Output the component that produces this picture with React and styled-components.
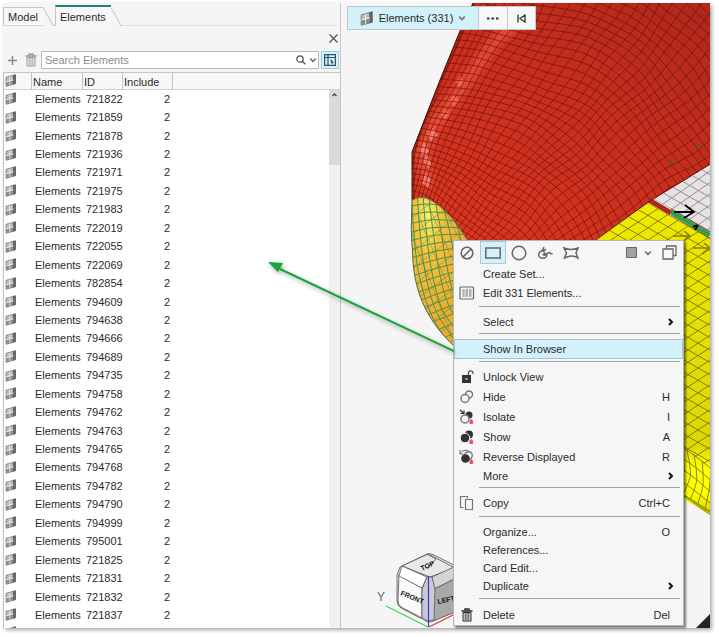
import { useState } from "react";
import styled, { createGlobalStyle } from "styled-components";

const GlobalStyle = createGlobalStyle`
  * {
    box-sizing: border-box;
  }
  body {
    margin: 0;
    background: #fff;
    color: #2b2b2b;
    font-family: "Liberation Sans", Arial, sans-serif;
    font-size: 11px;
  }
  button, input {
    font: inherit;
    color: inherit;
    margin: 0;
  }
`;

const Window = styled.main`
  display: flex;
  height: calc(100vh - 12px);
  margin: 3px 9px 9px 3px;
  background: #f5f5f5;
  box-shadow: 2px 2px 4px rgba(0, 0, 0, 0.35);
`;

const Panel = styled.section`
  display: flex;
  flex-direction: column;
  flex: 0 0 338px;
  min-width: 0;
  border-right: 1px solid #c4c4c4;
`;

const TabBar = styled.div`
  display: flex;
  align-items: flex-end;
  height: 23px;
  padding-top: 2px;
`;

const Tab = styled.button`
  display: flex;
  align-items: center;
  height: ${(p) => (p.$active ? 21 : 19)}px;
  padding: 0 5px 0 4px;
  border: 0;
  border-left: 1px solid #c4c4c4;
  border-top: ${(p) => (p.$active ? "2px solid #1d7f80" : "1px solid #c4c4c4")};
  border-bottom: ${(p) => (p.$active ? "0" : "1px solid #d6d6d6")};
  background: #f7f7f7;
`;

const Slant = styled.svg`
  flex: none;
  width: 12px;
  height: 19px;
  fill: none;
  stroke: #c4c4c4;
`;

const TabRule = styled.div`
  flex: 1;
  margin-right: 2px;
  border-bottom: 1px solid #e2e2e2;
`;

const CloseRow = styled.div`
  display: flex;
  justify-content: flex-end;
  align-items: center;
  height: 24px;
`;

const IconButton = styled.button`
  display: flex;
  align-items: center;
  justify-content: center;
  flex: none;
  width: ${(p) => p.$width || 18}px;
  height: 18px;
  padding: 0;
  border: 1px solid ${(p) => (p.$active ? "#9ccbd8" : "transparent")};
  background: ${(p) => (p.$active ? "#d6f1fa" : "transparent")};
  color: ${(p) => p.$color || "#555"};
`;

const SearchRow = styled.div`
  display: flex;
  align-items: center;
  gap: 2px;
  height: 22px;
  padding: 0 1px 2px 0;
`;

const SearchBox = styled.div`
  display: flex;
  flex: 1;
  align-items: center;
  min-width: 0;
  height: 18px;
  border: 1px solid #b9b9b9;
  background: #fff;

  input {
    flex: 1;
    min-width: 0;
    padding: 0 3px;
    border: 0;
    outline: 0;
    background: transparent;
  }
  input::placeholder {
    color: #8c8c8c;
  }
`;

const ListArea = styled.div`
  position: relative;
  flex: 1;
  min-height: 0;
  overflow: hidden;
  background: #fff;
  border-left: 1px solid #c4c4c4;
`;

const ElementTable = styled.table`
  width: 100%;
  height: 570px;
  table-layout: fixed;
  border-collapse: separate;
  border-spacing: 0;

  th {
    height: 18px;
    padding: 2px 1px 0;
    border-top: 1px solid #c4c4c4;
    border-bottom: 1px solid #d0d0d0;
    border-right: 1px solid #c4c4c4;
    background: #f7f7f7;
    font-weight: 400;
    text-align: left;
    line-height: 13px;
  }
  th:last-child {
    border-right: 0;
  }
  td {
    padding: 0 3px 1px;
    line-height: 14px;
    white-space: nowrap;
  }
  th:first-child,
  td:first-child {
    padding: 0 1px 1px;
  }
  td:nth-child(4) {
    padding-right: 3px;
    text-align: right;
  }
  svg {
    display: block;
  }
`;

const ScrollTrack = styled.div`
  position: absolute;
  top: 18px;
  right: 0;
  bottom: 0;
  width: 11px;
  background: #f1f1f1;
`;

const ScrollThumb = styled.div`
  display: flex;
  justify-content: center;
  height: 75px;
  padding-top: 3px;
  background: #dadada;
`;

const Viewport = styled.section`
  position: relative;
  flex: 1;
  min-width: 0;
`;

const Scene = styled.svg`
  display: block;
  width: 100%;
  height: 100%;
`;

const SelectionBar = styled.div`
  position: absolute;
  top: 3px;
  left: 6px;
  display: flex;
  height: 24px;
  border: 1px solid #c2c8ca;
  background: #f7f7f7;
`;

const BarButton = styled.button`
  display: flex;
  align-items: center;
  justify-content: center;
  gap: 5px;
  width: ${(p) => p.$width}px;
  padding: 0;
  border: 0;
  border-left: ${(p) => (p.$divided ? "1px solid #c2c8ca" : "0")};
  background: ${(p) => (p.$active ? "#d3f1fa" : "#f8f8f8")};
`;

const Menu = styled.div`
  position: absolute;
  top: 237px;
  left: 112px;
  width: 231px;
  border: 1px solid #b5b5b5;
  background: #f6f6f6;
  box-shadow: 2px 2px 2px rgba(0, 0, 0, 0.5);
`;

const MenuTools = styled.div`
  display: flex;
  align-items: flex-start;
  height: 24px;
`;

const ToolButton = styled.button`
  display: flex;
  align-items: center;
  justify-content: center;
  width: ${(p) => p.$width || 26}px;
  height: 23px;
  margin-left: ${(p) => (p.$push ? "auto" : "0")};
  padding: 0;
  border: 1px solid ${(p) => (p.$active ? "#a6cbd6" : "transparent")};
  background: ${(p) => (p.$active ? "#d3f1fa" : "transparent")};
`;

const MenuItem = styled.button`
  display: flex;
  align-items: center;
  width: 100%;
  height: ${(p) => (p.$tall ? 20 : 18)}px;
  padding: 0 12px 0 0;
  border: 1px solid ${(p) => (p.$active ? "#a9c3cb" : "transparent")};
  background: ${(p) => (p.$active ? "#d3f1fa" : "transparent")};
  text-align: left;
`;

const MenuIcon = styled.span`
  display: flex;
  justify-content: center;
  width: 24px;
  margin-right: 4px;
`;

const MenuLabel = styled.span`
  flex: 1;
`;

const Submenu = styled.svg`
  margin-right: -4px;
`;

const MenuRule = styled.hr`
  height: 1px;
  margin: ${(p) => (p.$tight ? "2px 3px 5px 25px" : "3px 3px 6px 25px")};
  border: 0;
  background: #a3a3a3;
`;

const Pointer = styled.svg`
  position: absolute;
  top: 16px;
  left: -190px;
  width: 190px;
  height: 104px;
  pointer-events: none;
  filter: drop-shadow(1px 2px 2px rgba(0, 0, 0, 0.35));
`;

const ids = [
  721822, 721859, 721878, 721936, 721971, 721975, 721983, 722019, 722055,
  722069, 782854, 794609, 794638, 794666, 794689, 794735, 794758, 794762,
  794763, 794765, 794768, 794782, 794790, 794999, 795001, 721825, 721831,
  721832, 721837,
];

const menu = [
  { label: "Create Set..." },
  { label: "Edit 331 Elements...", icon: "edit", tall: true },
  { rule: true },
  { label: "Select", sub: true },
  { rule: true, tight: true },
  { label: "Show In Browser", tall: true, active: true },
  { rule: true, tight: true },
  { label: "Unlock View", icon: "lock", tall: true },
  { label: "Hide", icon: "hide", keys: "H", tall: true },
  { label: "Isolate", icon: "isolate", keys: "I", tall: true },
  { label: "Show", icon: "show", keys: "A", tall: true },
  { label: "Reverse Displayed", icon: "reverse", keys: "R", tall: true },
  { label: "More", sub: true },
  { rule: true, tight: true },
  { label: "Copy", icon: "copy", keys: "Ctrl+C", tall: true },
  { rule: true },
  { label: "Organize...", keys: "O" },
  { label: "References..." },
  { label: "Card Edit..." },
  { label: "Duplicate", sub: true },
  { rule: true },
  { label: "Delete", icon: "trash", keys: "Del", tall: true },
];

// Grid lines of a quad that is cut into nu x nv cells.
const subdivide = ([a, b, c, d], nu, nv) => {
  const at = (i, j) => {
    const u = i / nu;
    const v = j / nv;
    return [0, 1]
      .map((k) =>
        (
          (1 - u) * (1 - v) * a[k] +
          u * (1 - v) * b[k] +
          u * v * c[k] +
          (1 - u) * v * d[k]
        ).toFixed(1)
      )
      .join(" ");
  };
  let path = "";
  for (let i = 0; i <= nu; i++) path += `M${at(i, 0)}L${at(i, nv)}`;
  for (let j = 0; j <= nv; j++) path += `M${at(0, j)}L${at(nu, j)}`;
  return path;
};

// Catmull-Rom value through a list of points, t from 0 to points.length - 1.
const spline = (points, t) => {
  const last = points.length - 1;
  const i = Math.min(Math.floor(t), last - 1);
  const f = t - i;
  const p1 = points[i];
  const p2 = points[i + 1];
  const p0 = points[i - 1] || p1.map((v, k) => 2 * v - p2[k]);
  const p3 = points[i + 2] || p2.map((v, k) => 2 * v - p1[k]);
  return [0, 1].map(
    (k) =>
      0.5 *
      (2 * p1[k] +
        (p2[k] - p0[k]) * f +
        (2 * p0[k] - 5 * p1[k] + 4 * p2[k] - p3[k]) * f * f +
        (3 * p1[k] - p0[k] - 3 * p2[k] + p3[k]) * f * f * f)
  );
};

// Curved mesh over a net of control points; wobble bends the lines a little.
const surface = (net, perRow, perCol, wobble) => {
  const nu = (net[0].length - 1) * perRow;
  const nv = (net.length - 1) * perCol;
  const at = (i, j) => {
    const [x, y] = spline(
      net.map((row) => spline(row, i / perRow)),
      j / perCol
    );
    const dx = wobble * Math.sin(y / 17 + x / 41) + (wobble / 2) * Math.sin(x / 9);
    const dy = wobble * Math.sin(x / 19 - y / 37) + (wobble / 2) * Math.sin(y / 11);
    return `${(x + dx).toFixed(1)} ${(y + dy).toFixed(1)}`;
  };
  let path = "";
  for (let i = 0; i <= nu; i++)
    for (let j = 0; j <= nv; j++) path += (j ? "L" : "M") + at(i, j);
  for (let j = 0; j <= nv; j++)
    for (let i = 0; i <= nu; i++) path += (i ? "L" : "M") + at(i, j);
  return path;
};

const redMesh = surface(
  [
    [[392, 205], [406, 146], [436, 76], [468, 0], [494, -64]],
    [[426, 218], [446, 152], [484, 85], [528, 10], [560, -54]],
    [[450, 240], [496, 177], [556, 108], [618, 34], [660, -40]],
    [[480, 265], [540, 206], [606, 146], [672, 86], [740, 20]],
    [[506, 310], [575, 257], [650, 204], [722, 156], [800, 108]],
  ],
  11,
  8,
  2
);

const orangeMesh = surface(
  [
    [[404, 190], [408, 232], [411, 275], [426, 315], [450, 356]],
    [[428, 190], [434, 228], [438, 268], [450, 306], [474, 344]],
    [[452, 196], [466, 228], [472, 262], [484, 296], [500, 330]],
  ],
  5,
  4,
  1
);

const orangeBraces = subdivide([[396, 230], [460, 180], [520, 290], [440, 350]], 6, 9);

const yellowMesh = subdivide(
  [[648, 203], [958, 381], [648, 587], [338, 409]],
  31,
  31
);
const whiteMesh = subdivide(
  [[654, 199], [734, 245], [814, 189], [734, 143]],
  9,
  9
);
const rimMesh = surface(
  [
    [[674, 442], [694, 455], [720, 476]],
    [[678, 466], [697, 480], [715, 496]],
    [[668, 484], [690, 500], [712, 516]],
  ],
  3,
  2,
  0
);

const ElementIcon = ({ size = 12 }) => (
  <svg width={size} height={size + 1} viewBox="0 0 12 13" aria-hidden="true">
    <path d="M1 3.300 8.500 1.300v9L1 12.300z" fill="#bdbdbd" stroke="#777" strokeWidth="0.800" />
    <path d="m8.500 1.300 2-.600v9l-2 .600z" fill="#6b6b6b" stroke="#555" strokeWidth="0.800" />
    <path d="M1.300 8 8.200 6.200v3.900L1.300 12z" fill="#8a8a8a" />
    <path d="M1 7.800 8.500 5.900M4.800 2.500v8.600" stroke="#f4f4f4" strokeWidth="0.800" />
  </svg>
);

const TrashIcon = () => (
  <svg width="12" height="14" viewBox="0 0 12 14" fill="none" stroke="currentColor" aria-hidden="true">
    <path d="M.500 3h11M4 3V1h4v2" strokeWidth="1.300" />
    <path d="M2 4.500h8v8.500H2z" fill="currentColor" fillOpacity="0.150" />
    <path d="M4.300 5v7M6 5v7M7.700 5v7" strokeWidth="0.700" />
  </svg>
);

const Chevron = () => (
  <svg width="8" height="6" viewBox="0 0 8 6" fill="none" stroke="#777" strokeWidth="1.800" aria-hidden="true">
    <path d="m1.200 1.500 2.800 3 2.800-3" />
  </svg>
);

const RedMark = () => (
  <path d="M11 14.500v-2.500l1.300-1.500 1.300 1.500v2.500z" fill="#e8505a" stroke="#e8505a" />
);

const glyphs = {
  edit: (
    <g fill="none" stroke="#666" strokeWidth="1.200">
      <rect x="1" y="2" width="13.500" height="12" rx="1" />
      <path d="M3.500 5h2M3.500 7h2M3.500 9h2M3.500 11h2M6.500 5H9M6.500 7H9M6.500 9H9M6.500 11H9M10 5h2.500M10 7h2.500M10 9h2.500M10 11h2.500" />
    </g>
  ),
  lock: (
    <g>
      <path d="M3 6h9v8H3z" fill="#333" />
      <path d="M9.500 6V4a2.200 2.200 0 0 1 4.400 0v1" fill="none" stroke="#555" strokeWidth="1.300" />
      <path d="M6.500 9h2v2h-2z" fill="#bbb" />
    </g>
  ),
  hide: (
    <g fill="#f6f6f6" stroke="#777" strokeWidth="1.400">
      <circle cx="10" cy="5.500" r="3.500" />
      <circle cx="6" cy="9.500" r="4" />
    </g>
  ),
  isolate: (
    <g>
      <circle cx="10" cy="6" r="3.500" fill="#333" />
      <circle cx="6" cy="10" r="4" fill="#f6f6f6" stroke="#777" strokeWidth="1.500" />
      <path d="m1 1 4 3.500M5 1.500v3H1.500" fill="none" stroke="#333" strokeWidth="1.200" />
      <RedMark />
    </g>
  ),
  show: (
    <g>
      <circle cx="10" cy="5.500" r="4" fill="#333" />
      <circle cx="6" cy="9" r="4.800" fill="#333" stroke="#f6f6f6" />
      <RedMark />
    </g>
  ),
  reverse: (
    <g>
      <circle cx="9.500" cy="6.500" r="3.800" fill="none" stroke="#777" strokeWidth="1.400" />
      <circle cx="6.500" cy="9.500" r="4.300" fill="#333" />
      <path d="M1.500 4.500c1.500-3 5-4 8-2.500M1 1v4h3.500" fill="none" stroke="#666" />
      <RedMark />
    </g>
  ),
  copy: (
    <g fill="#f6f6f6" stroke="#777" strokeWidth="1.200">
      <path d="M4.500 12.500H1.500V1.500h7v2" />
      <path d="M6.500 4.500h7v10h-7z" />
    </g>
  ),
};

const Glyph = ({ name }) =>
  name === "trash" ? (
    <TrashIcon />
  ) : (
    <svg width="16" height="16" viewBox="0 0 16 16" aria-hidden="true">
      {glyphs[name]}
    </svg>
  );

const tools = [
  {
    name: "Clear",
    art: (
      <>
        <circle cx="8" cy="8" r="5.800" />
        <path d="m4 12 8-8" />
      </>
    ),
  },
  { name: "Rectangle", art: <path d="M.800 3h14.400v10H.800z" /> },
  { name: "Circle", art: <circle cx="8" cy="8" r="6.800" /> },
  {
    name: "Freehand",
    art: <path d="M5.500 5.500C1 7 .500 11.500 4 13c4 1 6.500-1.500 5.500-3.500-1-1.500-4-.500-3 .500 2 1.500 4-3 6-2.500 1 .300.500 1.800 3 1M5.500 5.500 9 4.500M7 2l-1.500 3.500L8 7.500" />,
  },
  {
    name: "Polygon",
    art: <path d="M1 3c4.500 2 9.500 2 14 0l-2 5 2 5c-3.500-2.500-7-2.500-11-1l-2.500 1L3.500 8z" />,
  },
];

const ElementsPanel = () => {
  const [query, setQuery] = useState("");
  const rows = ids.filter((id) => String(id).includes(query));

  return (
    <Panel>
      <TabBar>
        <Tab>Model</Tab>
        <Slant viewBox="0 0 12 19">
          <path d="M0 .500 10 18.500H12" />
        </Slant>
        <Tab $active>Elements</Tab>
        <Slant viewBox="0 0 12 19">
          <path d="M0 .500 10 18.500H12" />
        </Slant>
        <TabRule />
      </TabBar>
      <CloseRow>
        <IconButton $width={14} aria-label="Close">
          <svg width="9" height="9" viewBox="0 0 9 9" stroke="currentColor" strokeWidth="1.300">
            <path d="m.500.500 8 8m0-8-8 8" />
          </svg>
        </IconButton>
      </CloseRow>
      <SearchRow>
        <IconButton $color="#888" aria-label="Add">
          <svg width="9" height="9" viewBox="0 0 9 9" stroke="currentColor" strokeWidth="1.500">
            <path d="M4.500 0v9M0 4.500h9" />
          </svg>
        </IconButton>
        <IconButton $width={16} $color="#999" aria-label="Delete element">
          <TrashIcon />
        </IconButton>
        <SearchBox>
          <input
            aria-label="Search Elements"
            placeholder="Search Elements"
            value={query}
            onChange={(e) => setQuery(e.target.value)}
          />
          <IconButton $width={14} aria-label="Search">
            <svg width="10" height="10" viewBox="0 0 10 10" fill="none" stroke="#555" strokeWidth="1.300">
              <circle cx="4" cy="4" r="3.200" />
              <path d="m6.300 6.300 3 3" />
            </svg>
          </IconButton>
          <IconButton $width={10} aria-label="Search options">
            <Chevron />
          </IconButton>
        </SearchBox>
        <IconButton $active aria-label="Browser selection">
          <svg width="12" height="12" viewBox="0 0 12 12" fill="none" stroke="#2a5566" strokeWidth="1.200">
            <path d="M.600.600h10.800v10.800H.600zM.600 3.500h10.800M4 1v10.500" />
            <path d="m6.500 5 3.500 3.500-1.700.100.700 1.900-2-1.500z" fill="#2a5566" stroke="none" />
          </svg>
        </IconButton>
      </SearchRow>
      <ListArea>
        <ElementTable>
          <colgroup>
            <col style={{ width: 28 }} />
            <col style={{ width: 51 }} />
            <col style={{ width: 40 }} />
            <col style={{ width: 50 }} />
            <col />
          </colgroup>
          <thead>
            <tr>
              <th aria-label="Type"><ElementIcon /></th>
              <th>Name</th>
              <th>ID</th>
              <th>Include</th>
              <th aria-label="Spacer" />
            </tr>
          </thead>
          <tbody>
            {rows.map((id) => (
              <tr key={id}>
                <td><ElementIcon /></td>
                <td>Elements</td>
                <td>{id}</td>
                <td>2</td>
                <td />
              </tr>
            ))}
            <tr>
              <td><ElementIcon /></td>
              <td colSpan={4} />
            </tr>
          </tbody>
        </ElementTable>
        <ScrollTrack>
          <ScrollThumb>
            <svg width="5" height="4" viewBox="0 0 5 4" fill="none" stroke="#444" strokeWidth="1.300">
              <path d="m.500 3 2-2 2 2" />
            </svg>
          </ScrollThumb>
        </ScrollTrack>
      </ListArea>
    </Panel>
  );
};

const Model = () => (
  <Scene viewBox="341 3 369 625" preserveAspectRatio="xMinYMin slice" aria-hidden="true">
    <defs>
      <linearGradient id="red" x1="0" y1="1" x2="1" y2="0">
        <stop offset="0" stopColor="#df3722" />
        <stop offset="0.500" stopColor="#cb2f1e" />
        <stop offset="1" stopColor="#b0271b" />
      </linearGradient>
      <radialGradient id="orange" cx="0.300" cy="0.120" r="0.700">
        <stop offset="0" stopColor="#ffee66" />
        <stop offset="0.350" stopColor="#f6be3a" />
        <stop offset="1" stopColor="#eeaa2c" />
      </radialGradient>
      <linearGradient id="yellow" x1="0" y1="0" x2="0" y2="1">
        <stop offset="0" stopColor="#eeea00" />
        <stop offset="0.550" stopColor="#dedc06" />
        <stop offset="0.780" stopColor="#dcda06" />
        <stop offset="0.850" stopColor="#ffff08" />
        <stop offset="0.930" stopColor="#ffff00" />
        <stop offset="1" stopColor="#d6d200" />
      </linearGradient>
      <clipPath id="redClip">
        <path id="redShape" d="M473 3 460 31 440 80 426 115 412 152V200Q418 196 426 198C446 206 458 226 468 241H596L648 203 710 165V3z" />
      </clipPath>
      <clipPath id="orangeClip">
        <path id="orangeShape" d="M412 200Q418 196 426 198C446 206 458 226 468 241V358C432 330 416 300 413 262Q410 230 412 200z" />
      </clipPath>
      <clipPath id="yellowClip">
        <path id="yellowShape" d="M596 240 648 203 710 238V515L684 499 600 450z" />
      </clipPath>
      <clipPath id="flatClip">
        <path d="M590 190H720V476L676 442z" />
      </clipPath>
      <clipPath id="whiteClip">
        <path id="whiteShape" d="M654 199 710 166V232z" />
      </clipPath>
      <filter id="soft">
        <feGaussianBlur stdDeviation="5" />
      </filter>
    </defs>

    <use href="#redShape" fill="url(#red)" />
    <g clipPath="url(#redClip)">
      <path d="M520 20 494 42 460 90 434 125 422 150 428 185" fill="none" stroke="#ff6a50" strokeWidth="9" opacity="0.700" filter="url(#soft)" />
      <g fill="#fb7a6b">
        <path d="m427 134 6-6 5 7-7 6zM419 150l5-8 5 9-5 5zM428 168l-5-8 4-5 5 10zM422 183l3-10 6 6-2 9z" />
        <path d="m449 101 5-6 5 5-5 6zM441 115l5-6 4 5-5 6zM455 82l5-6 4 6-5 5z" opacity="0.600" />
      </g>
      <path d="M473 3 440 80 412 152V200" fill="none" stroke="#6d170c" strokeWidth="6" opacity="0.400" />
      <path d={redMesh} fill="none" stroke="#5e1008" strokeWidth="0.800" opacity="0.750" />
    </g>
    <path d="M473 3 460 31 440 80 412 152V200" fill="none" stroke="#45120d" />

    <use href="#orangeShape" fill="url(#orange)" />
    <g clipPath="url(#orangeClip)" fill="none" stroke="#4a9050">
      <path d={orangeMesh} strokeWidth="1" />
      <path d={orangeBraces} strokeWidth="0.800" opacity="0.650" />
    </g>
    <use href="#orangeShape" fill="none" stroke="#48704a" />

    <use href="#yellowShape" fill="url(#yellow)" />
    <g clipPath="url(#yellowClip)" fill="none" stroke="#6a6500" strokeWidth="0.900">
      <path d={yellowMesh} opacity="0.850" clipPath="url(#flatClip)" />
      <path d={rimMesh} opacity="0.850" />
      <path d="m680 493 34 21" stroke="#a19c00" strokeWidth="2" />
      <path d="M673 236h17m-6-5 6 5-8 6M693 248h17m-6-5 6 5-8 6" stroke="#8b7b00" strokeWidth="1.600" />
    </g>

    <use href="#whiteShape" fill="#e6e2e4" />
    <path d={whiteMesh} clipPath="url(#whiteClip)" fill="none" stroke="#8d8787" strokeWidth="0.900" />
    <path d="m649 200 22 13" stroke="#ad2a1d" strokeWidth="5" />
    <path d="m671 212 39 23" stroke="#2aa049" strokeWidth="4" />
    <path d="m671 209 39 23M671 215l39 23M596 240l52-38 62-38" stroke="#3c2b12" fill="none" strokeWidth="0.800" />
    <path d="M674 212h19m-8-7 9 7-10 6M693 227l4-2m-2 5 3-5" stroke="#000" strokeWidth="1.800" fill="none" />
    <path d="m668 161 5-2 2 3-4 2zM695 145l5-2 2 3-4 2z" fill="#85451d" />

    <path d="M696 628 710 614V628z" fill="#242424" />

    <g stroke="#555" strokeWidth="0.800" strokeLinejoin="round">
      <path d="M400 567 427 554Q430 553 434 555L452 564 480 578V600L431 622 426 621 401 608Q397 606 397 600V575z" fill="#ddd" />
      <path d="M402 566 428 554 455 568 430 577z" fill="#e8e8e8" />
      <path d="M399 575 422 588V618L401 607Q398 605 398 600z" fill="#fafafa" />
      <path d="M402 566 427 577 422 588 399 576z" fill="#fff" />
      <path d="m434 589 24-12v34l-25 10z" fill="#a8a8a8" />
      <path d="m432 577 24-11v12l-22 11z" fill="#d4d4d4" />
      <path d="M427 577h5l3 12-1 31-7 1-5-4v-28z" fill="#c9c9d8" />
      <path d="M427 554 436 559 427 568" fill="none" />
    </g>
    <path d="M386 606 428 627" stroke="#3cdb4c" strokeWidth="1.300" />
    <path d="m429 627 30-15" stroke="#e13b3b" strokeWidth="1.300" />
    <path d="M428.500 576V627" stroke="#3a34d2" strokeWidth="1.200" />
    <g fill="#111" fontFamily="Liberation Sans, Arial, sans-serif" fontSize="7" fontWeight="700">
      <text x="400" y="595" transform="rotate(22 400 595)">FRONT</text>
      <text x="438" y="604" transform="rotate(-12 438 604)">LEFT</text>
      <text x="422" y="571" transform="rotate(-25 422 571)">TOP</text>
    </g>
    <text x="377" y="601" fill="#666" fontFamily="Liberation Sans, Arial, sans-serif" fontSize="12">Y</text>
  </Scene>
);

const ContextMenu = () => (
  <Menu>
    <MenuTools>
      {tools.map((tool, i) => (
        <ToolButton key={tool.name} $active={i === 1} aria-label={tool.name}>
          <svg width="16" height="16" viewBox="0 0 16 16" fill="none" stroke="#666" strokeWidth="1.500">
            {tool.art}
          </svg>
        </ToolButton>
      ))}
      <ToolButton $push $width={20} aria-label="Fill">
        <svg width="11" height="11" viewBox="0 0 11 11">
          <path d="M.500.500h10v10H.500z" fill="#a2a2a2" stroke="#666" />
        </svg>
      </ToolButton>
      <ToolButton $width={14} aria-label="Fill options">
        <Chevron />
      </ToolButton>
      <ToolButton $width={28} aria-label="Stack">
        <svg width="15" height="15" viewBox="0 0 15 15" fill="#f6f6f6" stroke="#666" strokeWidth="1.300">
          <path d="M4.500 1h9.500v9.500H4.500z" />
          <path d="M1 4h10v10H1z" />
        </svg>
      </ToolButton>
    </MenuTools>
    {menu.map((item, i) =>
      item.rule ? (
        <MenuRule key={i} $tight={item.tight} />
      ) : (
        <MenuItem key={item.label} $tall={item.tall} $active={item.active}>
          <MenuIcon>{item.icon && <Glyph name={item.icon} />}</MenuIcon>
          <MenuLabel>{item.label}</MenuLabel>
          {item.keys}
          {item.sub && (
            <Submenu width="6" height="8" viewBox="0 0 6 8" fill="none" stroke="#111" strokeWidth="2">
              <path d="m1 1 3 3-3 3" />
            </Submenu>
          )}
        </MenuItem>
      )
    )}
    <Pointer viewBox="0 0 190 104">
      <path d="M190 94 16 12" stroke="#17a43a" strokeWidth="2" />
      <path d="m4 5 15 1-5 9z" fill="#17a43a" />
    </Pointer>
  </Menu>
);

const App = () => (
  <>
    <GlobalStyle />
    <Window>
      <ElementsPanel />
      <Viewport>
        <Model />
        <SelectionBar>
          <BarButton $width={130} $active>
            <ElementIcon size={14} />
            Elements (331)
            <Chevron />
          </BarButton>
          <BarButton $width={29} $divided aria-label="More options">
            <svg width="12" height="3" viewBox="0 0 12 3" fill="#333">
              <path d="M0 .500h2.500v2H0zM4.500 .500H7v2H4.500zM9 .500h2.500v2H9z" />
            </svg>
          </BarButton>
          <BarButton $width={28} $divided aria-label="Reset">
            <svg width="9" height="9" viewBox="0 0 9 9" fill="none" stroke="#333" strokeWidth="1.300">
              <path d="M1 .500v8M8 1v7L3 4.500z" />
            </svg>
          </BarButton>
        </SelectionBar>
        <ContextMenu />
      </Viewport>
    </Window>
  </>
);

export default App;
